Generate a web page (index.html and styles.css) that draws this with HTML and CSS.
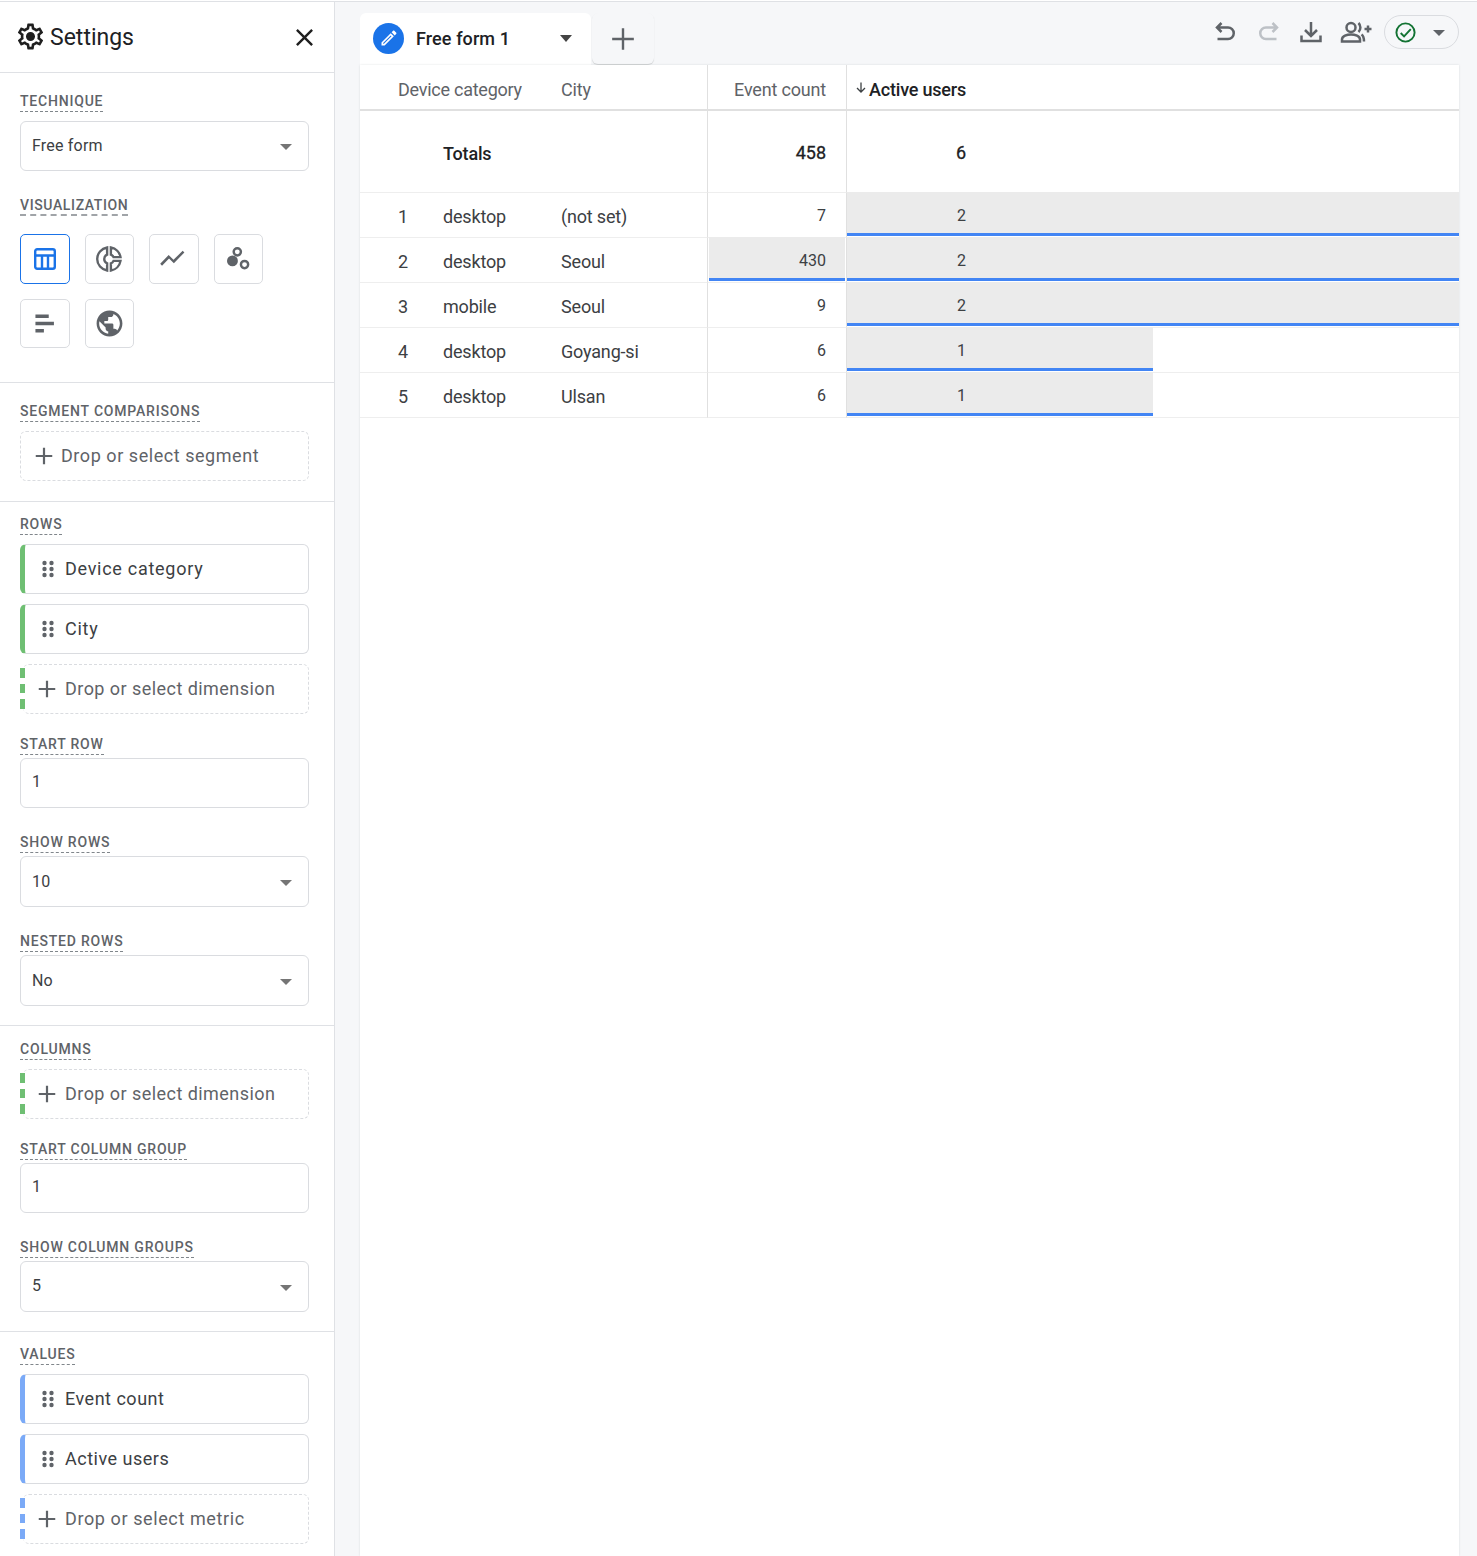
FILE: index.html
```html
<!DOCTYPE html>
<html lang="en">
<head>
<meta charset="utf-8">
<title>Explore settings</title>
<link rel="stylesheet" href="styles.css">
</head>
<body>
<div class="app">
  <aside class="sidebar">
    <header class="side-head">
      <svg class="gear" viewBox="0 0 24 24"><path d="M19.43 12.98c.04-.32.07-.64.07-.98 0-.34-.03-.66-.07-.98l2.11-1.65c.19-.15.24-.42.12-.64l-2-3.46c-.09-.16-.26-.25-.44-.25-.06 0-.12.01-.17.03l-2.49 1c-.52-.4-1.08-.73-1.69-.98l-.38-2.65C14.46 2.18 14.25 2 14 2h-4c-.25 0-.46.18-.49.42l-.38 2.65c-.61.25-1.17.59-1.69.98l-2.49-1c-.06-.02-.12-.03-.18-.03-.17 0-.34.09-.43.25l-2 3.46c-.13.22-.07.49.12.64l2.11 1.65c-.04.32-.07.65-.07.98 0 .33.03.66.07.98l-2.11 1.65c-.19.15-.24.42-.12.64l2 3.46c.09.16.26.25.44.25.06 0 .12-.01.17-.03l2.49-1c.52.4 1.08.73 1.69.98l.38 2.65c.03.24.24.42.49.42h4c.25 0 .46-.18.49-.42l.38-2.65c.61-.25 1.17-.59 1.69-.98l2.49 1c.06.02.12.03.18.03.17 0 .34-.09.43-.25l2-3.46c.12-.22.07-.49-.12-.64l-2.11-1.65zm-1.98-1.71c.04.31.05.52.05.73 0 .21-.02.43-.05.73l-.14 1.13.89.7 1.08.84-.7 1.21-1.27-.51-1.04-.42-.9.68c-.43.32-.84.56-1.25.73l-1.06.43-.16 1.13-.2 1.35h-1.4l-.19-1.35-.16-1.13-1.06-.43c-.43-.18-.83-.41-1.23-.71l-.91-.7-1.06.43-1.27.51-.7-1.21 1.08-.84.89-.7-.14-1.13c-.03-.31-.05-.54-.05-.74s.02-.43.05-.73l.14-1.13-.89-.7-1.08-.84.7-1.21 1.27.51 1.04.42.9-.68c.43-.32.84-.56 1.25-.73l1.06-.43.16-1.13.2-1.35h1.39l.19 1.35.16 1.13 1.06.43c.43.18.83.41 1.23.71l.91.7 1.06-.43 1.27-.51.7 1.21-1.07.85-.89.7.14 1.13zM12 8.500c-1.930 0-3.500 1.570-3.500 3.500s1.570 3.500 3.500 3.500 3.500-1.570 3.500-3.500-1.570-3.500-3.500-3.500z"/></svg>
      <h1 class="side-title">Settings</h1>
      <svg class="close" viewBox="0 0 24 24"><path d="M19 6.41L17.59 5 12 10.59 6.41 5 5 6.41 10.59 12 5 17.59 6.41 19 12 13.41 17.59 19 19 17.59 13.41 12z"/></svg>
    </header>

    <section class="sec sec-first">
      <span class="label">Technique</span>
      <div class="control select"><span>Free form</span><i class="caret"></i></div>
      <span class="label label-viz">Visualization</span>
      <div class="viz-grid">
        <div class="viz viz-on"><svg viewBox="0 0 24 24" class="viz-table"><rect x="2.200" y="2.200" width="19.600" height="19.600" rx="2"/><path d="M2.200 8.500h19.600M9 8.500v13.300M15 8.500v13.300"/></svg></div>
        <div class="viz"><svg viewBox="0 0 24 24" class="viz-line"><path d="M10.500 2.800A9.300 9.300 0 0 0 10.500 21.200V15.500A3.800 3.800 0 0 1 10.500 8.500zM13.500 2.800A9.300 9.300 0 0 1 21.200 10.500H15.600A3.800 3.800 0 0 0 13.500 8.500zM21.200 13.500A9.300 9.300 0 0 1 13.500 21.200V15.500A3.800 3.800 0 0 0 15.600 13.500z"/></svg></div>
        <div class="viz"><svg viewBox="0 0 24 24" class="viz-icon"><path d="M2.500 18l5.800-6 4 4L21 7l-1.400-1.400-7.600 7.500-4-4-7 7.300z"/></svg></div>
        <div class="viz"><svg viewBox="0 0 24 24" class="viz-icon"><circle cx="7" cy="14" r="4.500"/><circle class="ring" cx="11" cy="6.500" r="3"/><circle class="ring" cx="17" cy="17" r="3"/></svg></div>
        <div class="viz"><svg viewBox="0 0 24 24" class="viz-icon"><path d="M4.500 4.500h11v3h-11zM4.500 10.500h15.300v3H4.500zM4.500 16.500h7v3h-7z"/></svg></div>
        <div class="viz"><svg viewBox="0 0 24 24" class="viz-globe"><path d="M12 2C6.480 2 2 6.480 2 12s4.480 10 10 10 10-4.480 10-10S17.520 2 12 2zm-1 17.930c-3.950-.490-7-3.850-7-7.930 0-.620.080-1.210.210-1.790L9 15v1c0 1.100.900 2 2 2v1.930zm6.900-2.540c-.260-.810-1-1.390-1.900-1.390h-1v-3c0-.550-.450-1-1-1H8v-2h2c.550 0 1-.450 1-1V7h2c1.100 0 2-.900 2-2v-.410c2.930 1.190 5 4.060 5 7.410 0 2.080-.800 3.970-2.100 5.390z"/></svg></div>
      </div>
    </section>

    <section class="sec sec-seg">
      <span class="label">Segment comparisons</span>
      <div class="control drop drop-plain"><svg class="plus" viewBox="0 0 24 24"><path d="M10.800 3h2.400v7.800H21v2.400h-7.800V21h-2.400v-7.800H3v-2.400h7.800z"/></svg><span>Drop or select segment</span></div>
    </section>

    <section class="sec sec-tight">
      <span class="label">Rows</span>
      <div class="chips">
        <div class="control chip chip-green"><svg class="grip" viewBox="0 0 12 18"><circle cx="2.500" cy="3" r="2.200"/><circle cx="9.500" cy="3" r="2.200"/><circle cx="2.500" cy="9" r="2.200"/><circle cx="9.500" cy="9" r="2.200"/><circle cx="2.500" cy="15" r="2.200"/><circle cx="9.500" cy="15" r="2.200"/></svg><span>Device category</span></div>
        <div class="control chip chip-green"><svg class="grip" viewBox="0 0 12 18"><circle cx="2.500" cy="3" r="2.200"/><circle cx="9.500" cy="3" r="2.200"/><circle cx="2.500" cy="9" r="2.200"/><circle cx="9.500" cy="9" r="2.200"/><circle cx="2.500" cy="15" r="2.200"/><circle cx="9.500" cy="15" r="2.200"/></svg><span>City</span></div>
        <div class="control drop drop-striped stripes-green"><div class="stripes"><i></i><i></i><i></i></div><svg class="plus" viewBox="0 0 24 24"><path d="M10.800 3h2.400v7.800H21v2.400h-7.800V21h-2.400v-7.800H3v-2.400h7.800z"/></svg><span>Drop or select dimension</span></div>
      </div>
      <span class="label label-small label-after-chips">Start row</span>
      <div class="control input">1</div>
      <span class="label label-small label-next">Show rows</span>
      <div class="control select select-tall"><span>10</span><i class="caret"></i></div>
      <span class="label label-small label-next">Nested rows</span>
      <div class="control select select-tall"><span>No</span><i class="caret"></i></div>
    </section>

    <section class="sec sec-tight sec-columns">
      <span class="label">Columns</span>
      <div class="control drop drop-striped stripes-green"><div class="stripes"><i></i><i></i><i></i></div><svg class="plus" viewBox="0 0 24 24"><path d="M10.800 3h2.400v7.800H21v2.400h-7.800V21h-2.400v-7.800H3v-2.400h7.800z"/></svg><span>Drop or select dimension</span></div>
      <span class="label label-small label-after-chips">Start column group</span>
      <div class="control input">1</div>
      <span class="label label-small label-next">Show column groups</span>
      <div class="control select select-tall"><span class="nudge-up">5</span><i class="caret"></i></div>
    </section>

    <section class="sec sec-tight sec-last">
      <span class="label">Values</span>
      <div class="chips">
        <div class="control chip chip-blue chip-metric"><svg class="grip" viewBox="0 0 12 18"><circle cx="2.500" cy="3" r="2.200"/><circle cx="9.500" cy="3" r="2.200"/><circle cx="2.500" cy="9" r="2.200"/><circle cx="9.500" cy="9" r="2.200"/><circle cx="2.500" cy="15" r="2.200"/><circle cx="9.500" cy="15" r="2.200"/></svg><span>Event count</span></div>
        <div class="control chip chip-blue chip-metric"><svg class="grip" viewBox="0 0 12 18"><circle cx="2.500" cy="3" r="2.200"/><circle cx="9.500" cy="3" r="2.200"/><circle cx="2.500" cy="9" r="2.200"/><circle cx="9.500" cy="9" r="2.200"/><circle cx="2.500" cy="15" r="2.200"/><circle cx="9.500" cy="15" r="2.200"/></svg><span>Active users</span></div>
        <div class="control drop drop-striped stripes-blue drop-metric"><div class="stripes"><i></i><i></i><i></i></div><svg class="plus" viewBox="0 0 24 24"><path d="M10.800 3h2.400v7.800H21v2.400h-7.800V21h-2.400v-7.800H3v-2.400h7.800z"/></svg><span>Drop or select metric</span></div>
      </div>
    </section>
  </aside>

  <main class="main">
    <div class="topbar">
      <div class="tabs">
        <div class="tab">
          <span class="tab-badge"><svg viewBox="0 0 24 24"><path d="M14.060 9.020l.920.920L5.920 19H5v-.920l9.060-9.060M17.660 3c-.250 0-.510.100-.700.290l-1.830 1.830 3.750 3.750 1.830-1.830c.390-.390.390-1.020 0-1.410l-2.340-2.340c-.200-.200-.450-.290-.710-.290zm-3.600 3.190L3 17.250V21h3.750L17.810 9.940l-3.750-3.750z"/></svg></span>
          <span class="tab-name">Free form 1</span>
          <i class="caret caret-dark"></i>
        </div>
        <div class="tab-add"><svg viewBox="0 0 24 24"><path d="M10.900 2h2.200v8.900H22v2.200h-8.900V22h-2.200v-8.900H2v-2.200h8.900z"/></svg></div>
      </div>
      <div class="tools">
        <svg class="tool tool-undo" viewBox="0 0 24 24"><path d="M8.500 3L4 7.500l4.500 4.500M4.500 7.500H15a5.750 5.750 0 0 1 0 11.500H4.500"/></svg>
        <svg class="tool tool-redo" viewBox="0 0 24 24"><path d="M15.500 3L20 7.500 15.500 12M19.500 7.500H9A5.750 5.750 0 0 0 9 19h10.500"/></svg>
        <svg class="tool tool-down" viewBox="0 0 24 24"><path d="M12 2v13.500M6 10l6 6 6-6M2.500 15.500v5.500h19v-5.500"/></svg>
        <svg class="tool tool-share" viewBox="0 0 32 24"><circle cx="11" cy="7.500" r="4.500"/><path d="M2 21.500v-2c0-3.500 5-5 9-5s9 1.500 9 5v2zM18.500 3c2.500 2.500 2.500 6.500 0 9M21.500 14.500c1.500 1 2.500 3 2.500 7M24.500 9h7M28 5.500v7"/></svg>
        <div class="status">
          <svg class="status-check" viewBox="0 0 24 24"><circle cx="12" cy="12" r="9.500"/><path d="M7 12.500l3.500 3.500 7-7.500"/></svg>
          <i class="caret caret-status"></i>
        </div>
      </div>
    </div>

    <div class="canvas">
      <table class="report">
        <colgroup><col class="c-idx"><col class="c-dev"><col class="c-city"><col class="c-ev"><col class="c-au"></colgroup>
        <thead>
          <tr>
            <th class="th-dim" colspan="2">Device category</th>
            <th class="th-city">City</th>
            <th class="th-num">Event count</th>
            <th class="th-sort"><svg class="sort-arrow" viewBox="0 0 10 11"><path d="M5 .5v9.500M1 6l4 4 4-4"/></svg>Active users</th>
          </tr>
        </thead>
        <tbody>
          <tr class="totals">
            <td></td><td>Totals</td><td></td>
            <td class="num">458</td>
            <td class="num-au">6</td>
          </tr>
          <tr>
            <td class="idx">1</td><td>desktop</td><td>(not set)</td>
            <td class="num"><b class="val">7</b></td>
            <td class="num-au"><i class="bar" style="width:100%"></i><b class="val">2</b></td>
          </tr>
          <tr>
            <td class="idx">2</td><td>desktop</td><td>Seoul</td>
            <td class="num"><i class="bar bar-inset"></i><b class="val">430</b></td>
            <td class="num-au"><i class="bar" style="width:100%"></i><b class="val">2</b></td>
          </tr>
          <tr>
            <td class="idx">3</td><td>mobile</td><td>Seoul</td>
            <td class="num"><b class="val">9</b></td>
            <td class="num-au"><i class="bar" style="width:100%"></i><b class="val">2</b></td>
          </tr>
          <tr>
            <td class="idx">4</td><td>desktop</td><td>Goyang-si</td>
            <td class="num"><b class="val">6</b></td>
            <td class="num-au"><i class="bar" style="width:50%"></i><b class="val">1</b></td>
          </tr>
          <tr>
            <td class="idx">5</td><td>desktop</td><td>Ulsan</td>
            <td class="num"><b class="val">6</b></td>
            <td class="num-au"><i class="bar" style="width:50%"></i><b class="val">1</b></td>
          </tr>
        </tbody>
      </table>
    </div>
  </main>
</div>
</body>
</html>
```

FILE: styles.css
```css
* { box-sizing: border-box; }
html, body { margin: 0; padding: 0; }
body {
  background: #fff;
  font-family: Roboto, "Liberation Sans", sans-serif;
  color: #202124;
  overflow: hidden;
}
.app {
  display: flex;
  height: 1555px;
  margin-top: 1px;
  border-top: 1px solid #dfe1e5;
  overflow: hidden;
}

/* Sidebar */
.sidebar {
  flex: 0 0 335px;
  border-right: 1px solid #dfe1e5;
  background: #fff;
}
.side-head {
  display: flex;
  align-items: center;
  height: 71px;
  padding: 0 15px;
  border-bottom: 1px solid #dfe1e5;
}
.gear { width: 31px; height: 31px; fill: #1f1f1f; flex: none; margin-top: -1px; }
.side-title {
  margin: 0 0 0 4px;
  flex: 1;
  font-size: 23px;
  font-weight: 400;
  color: #202124;
}
.close { width: 29px; height: 29px; fill: #1f1f1f; flex: none; }

.sec {
  padding: 19px 25px 20px 20px;
  border-bottom: 1px solid #dfe1e5;
}
.sec-first { padding-bottom: 34px; }
.sec-tight { padding-top: 13px; padding-bottom: 19px; }
.sec-columns { padding-top: 14px; }
.sec-last { border-bottom: 0; }

.label {
  display: block;
  width: fit-content;
  height: 20px;
  margin-bottom: 9px;
  font-size: 14px;
  line-height: 18px;
  font-weight: 500;
  letter-spacing: .8px;
  text-transform: uppercase;
  color: #5f6368;
  border-bottom: 1px dashed #80868b;
}
.label-small { margin-bottom: 3px; }
.label-viz { margin-top: 25px; margin-bottom: 18px; letter-spacing: .62px; border-bottom: 2px dashed #a0a4a8; }
.label-after-chips { margin-top: 21px; }
.label-next { margin-top: 25px; }

.control {
  position: relative;
  display: flex;
  align-items: center;
  width: 289px;
  height: 50px;
  background: #fff;
  border: 1px solid #dadce0;
  border-radius: 6px;
}
.select, .input {
  padding: 0 16px 0 11px;
  font-size: 16px;
  letter-spacing: .2px;
  color: #3c4043;
}
.select span { flex: 1; padding-bottom: 2px; }
.select-tall { height: 51px; }
.select-tall span { padding-bottom: 0; }
.select-tall .nudge-up { padding-bottom: 2px; }
.input { padding-bottom: 4px; }
.caret {
  display: block;
  width: 0;
  height: 0;
  border-left: 6px solid transparent;
  border-right: 6px solid transparent;
  border-top: 6px solid #757575;
  margin-top: 2px;
}

/* Viz buttons */
.viz-grid {
  display: flex;
  flex-wrap: wrap;
  gap: 15px;
  width: 275px;
}
.viz {
  display: flex;
  align-items: center;
  justify-content: center;
  width: 49.500px;
  height: 49.500px;
  border: 1px solid #dadce0;
  border-radius: 5px;
  background: #fff;
}
.viz-on { border-color: #1a73e8; }
.viz-icon { width: 29px; height: 29px; fill: #5f6368; }
.viz-table { width: 24px; height: 24px; fill: none; stroke: #1a73e8; stroke-width: 2.400; }
.viz-line { width: 30px; height: 30px; fill: none; stroke: #5f6368; stroke-width: 1.900; }
.viz-globe { width: 31px; height: 31px; fill: #5f6368; }
.ring { fill: none; stroke: #5f6368; stroke-width: 2; }

/* Chips */
.chip, .drop {
  font-size: 18px;
  letter-spacing: .45px;
}
.chips { display: flex; flex-direction: column; gap: 10px; }
.chip { color: #3c4043; padding-left: 17px; border-left-width: 5px; letter-spacing: .72px; }
.chip-metric { letter-spacing: .5px; }
.chip-green { border-left-color: #6fbf73; }
.chip-blue { border-left-color: #7baaf7; }
.grip { width: 12px; height: 18px; fill: #5f6368; flex: none; margin-right: 11px; margin-top: -1px; }
.chip span, .drop span { padding-bottom: 1px; }
.drop {
  color: #5f6368;
  border: 1px dashed #dadce0;
}
.drop-plain { padding-left: 12px; letter-spacing: .55px; }
.drop-plain .plus { margin-right: 6px; }
.drop-striped { padding-left: 13px; border-left: 0; width: 286px; margin-left: 3px; }
.drop-metric { letter-spacing: .6px; }
.plus { width: 22px; height: 22px; fill: #5f6368; flex: none; margin-right: 7px; }
.stripes {
  position: absolute;
  left: -3px;
  top: 3px;
  display: flex;
  flex-direction: column;
  gap: 6px;
  width: 5px;
}
.stripes i { display: block; height: 9.500px; }
.stripes-green i { background: #6fbf73; }
.stripes-blue i { background: #7baaf7; }

/* Main */
.main {
  flex: 1;
  display: flex;
  flex-direction: column;
  background: #f6f7f9;
  padding: 0 18px 0 25px;
  min-width: 0;
}
.topbar {
  display: flex;
  justify-content: space-between;
  height: 63px;
  flex: none;
}
.tabs { display: flex; padding-top: 11px; gap: 1px; }
.tab {
  display: flex;
  align-items: center;
  width: 231px;
  height: 52px;
  padding: 0 19px 2px 13px;
  background: #fff;
  border-radius: 6px 6px 0 0;
}
.tab-badge {
  display: flex;
  align-items: center;
  justify-content: center;
  width: 31px;
  height: 31px;
  border-radius: 50%;
  background: #1a73e8;
  flex: none;
}
.tab-badge svg { width: 20px; height: 20px; fill: #fff; }
.tab-name {
  flex: 1;
  margin-left: 12px;
  font-size: 18px;
  font-weight: 500;
  letter-spacing: .1px;
  color: #202124;
}
.caret-dark { border-top-color: #444; border-top-width: 7px; margin-top: 0; }
.tab-add {
  display: flex;
  align-items: center;
  justify-content: center;
  width: 62px;
  height: 51px;
  background: #f6f7f9;
  border-radius: 6px;
  box-shadow: 0 1px 1px rgba(60,64,67,.2);
}
.tab-add svg { width: 26px; height: 26px; fill: #5f6368; }
.tools { display: flex; align-items: center; height: 62px; padding-top: 2px; }
.tool {
  fill: none;
  stroke: #5f6368;
  stroke-width: 2.500;
  width: 24px;
  height: 24px;
  margin-top: -4px;
}
.tool-undo { margin-right: 20px; }
.tool-redo { stroke: #bdc1c6; margin-right: 18px; }
.tool-down { margin-right: 17px; }
.tool-share { width: 32px; margin-right: 12px; }
.status {
  display: flex;
  align-items: center;
  width: 75px;
  height: 34px;
  margin-top: -4px;
  padding-left: 9px;
  border: 1px solid #dadce0;
  border-radius: 17px;
}
.status-check { width: 23px; height: 23px; fill: none; stroke: #137333; stroke-width: 2; }
.caret-status { margin-left: 16px; border-top-color: #5f6368; margin-top: 1px; }

/* Canvas */
.canvas {
  flex: 1;
  background: #fff;
  box-shadow: 0 0 2px rgba(60,64,67,.15);
}
.report {
  width: 100%;
  table-layout: fixed;
  border-collapse: separate;
  border-spacing: 0;
  font-size: 18px;
  letter-spacing: -.18px;
}
.c-idx { width: 83px; }
.c-dev { width: 118px; }
.c-city { width: 146px; }
.c-ev { width: 139px; }
th {
  height: 46px;
  font-weight: 400;
  text-align: left;
  color: #5f6368;
  padding: 4px 0 0;
  border-bottom: 2px solid #e0e0e0;
}
.th-dim { padding-left: 38px; letter-spacing: -.25px; }
.th-num {
  text-align: right;
  padding-right: 20px;
  border-left: 1px solid #e0e0e0;
}
.th-sort {
  color: #202124;
  font-weight: 500;
  border-left: 1px solid #e0e0e0;
  padding-left: 9px;
  letter-spacing: -.2px;
}
.sort-arrow {
  display: inline-block;
  width: 10px;
  height: 11px;
  margin-right: 3px;
  vertical-align: 3px;
  fill: none;
  stroke: #3c4043;
  stroke-width: 1.300;
}
td {
  position: relative;
  height: 45px;
  padding: 2px 0 0;
  color: #3c4043;
  border-bottom: 1px solid #eeeeee;
}
.idx { padding-left: 38px; }
.num {
  text-align: right;
  padding: 0 20px 0 0;
  font-size: 16px;
  letter-spacing: 0;
  border-left: 1px solid #e0e0e0;
}
.num-au {
  padding: 0;
  font-size: 16px;
  letter-spacing: 0;
  border-left: 1px solid #e0e0e0;
}
.val { position: relative; font-weight: 400; }
.num-au .val { display: block; width: 119px; text-align: right; }
.bar {
  position: absolute;
  left: 0;
  top: -1px;
  bottom: 1px;
  background: #ebebeb;
  border-bottom: 3px solid #4285f4;
}
.bar-inset { left: 1px; right: 1px; }
.totals td {
  height: 82px;
  font-weight: 500;
  color: #202124;
  padding-top: 4px;
}
.totals .num, .totals .num-au { font-size: 18px; font-weight: 400; padding-top: 1px; -webkit-text-stroke: .3px #202124; }
.totals .num-au { text-indent: 109px; }
```
